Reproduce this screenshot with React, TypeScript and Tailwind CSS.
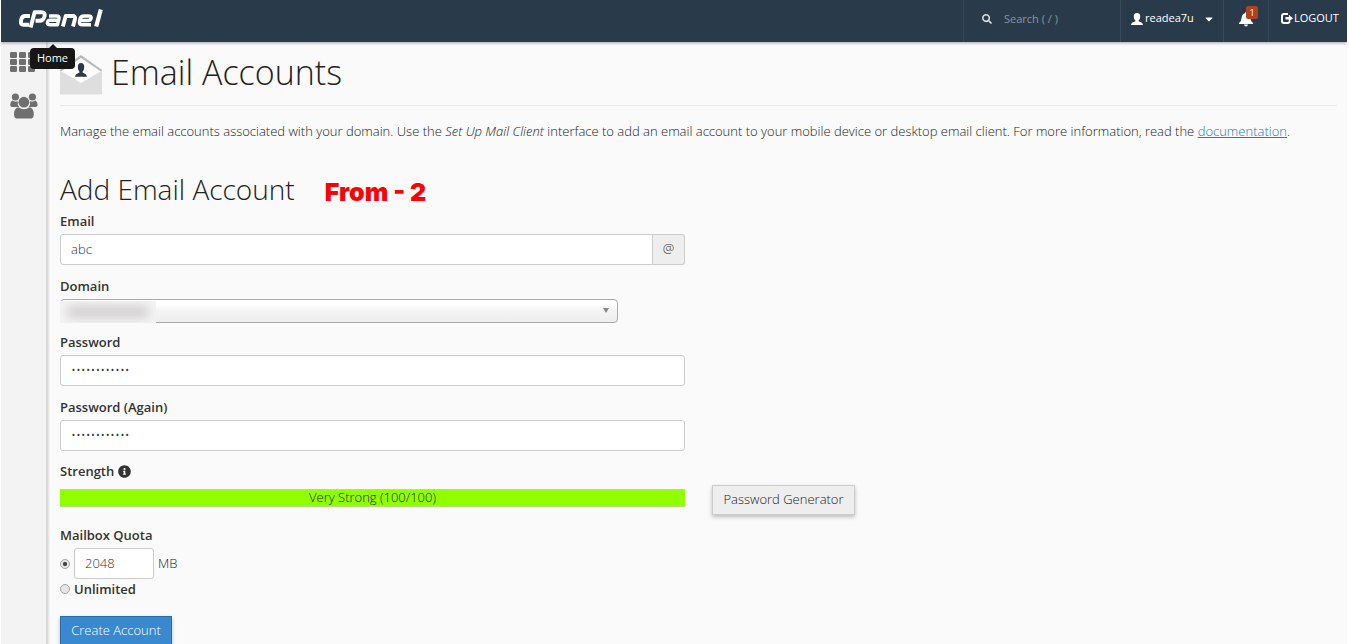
import React from 'react';
import { FaSearch, FaInfoCircle, FaCaretDown } from 'react-icons/fa';

function Logo() {
  return (
    <svg viewBox="0 0 86 20" className="h-5 w-[86px]" fill="none" stroke="#fff" strokeWidth="3.9" strokeLinejoin="round" role="img" aria-label="cPanel">
      <path d="M12 7H7.500Q4.200 7 3.400 10L3 12Q2.300 15.800 5.500 15.800H11" />
      <path d="M12.600 18.400L16.600 3.200H23.500Q27.500 3.200 26.600 7Q25.500 11.800 21.500 11.800H17.500" />
      <path d="M31 7H38.500Q41.700 7 41 9.800L39.400 15.800H31.600Q28.800 15.800 29.400 13.400Q30 11.200 32.200 11.200H40" strokeWidth="3.400" />
      <path d="M44.800 17.500L47.700 7H54.400Q57.800 7 57 10L55 17.500" />
      <path d="M73 15.800H64.500Q60.600 15.800 61.500 12.200L62 10Q62.900 7 66 7H70.400Q73.700 7 73.100 9.400Q72.600 11.500 70.200 11.500H63" strokeWidth="3.400" />
      <path d="M82.800 .5L78.200 17.500" strokeWidth="4.200" />
    </svg>
  );
}

function GridIcon() {
  return (
    <svg viewBox="0 0 26 21" className="h-[21px] w-[26px]" fill="#6f6f6f" aria-hidden="true">
      {[0, 7, 14].map((y) => [0, 9, 18].map((x) => <rect key={`${x}-${y}`} x={x} y={y} width="7" height="6" rx="1.2" />))}
    </svg>
  );
}

function UsersIcon() {
  return (
    <svg viewBox="0 0 28 26" className="h-[26px] w-7" fill="#6f6f6f" aria-hidden="true">
      <circle cx="5.4" cy="4" r="3.6" />
      <circle cx="22.4" cy="4" r="3.6" />
      <path d="M2.6 7.6Q5 9.4 7.8 8.2Q7.2 12 9.2 14H3Q.2 14 .2 11.4Q.4 8.4 2.6 7.6Z" />
      <path d="M25.2 7.6Q22.8 9.4 20 8.2Q20.6 12 18.6 14H24.8Q27.6 14 27.6 11.4Q27.4 8.4 25.2 7.6Z" />
      <circle cx="13.9" cy="9.2" r="5.4" />
      <path d="M8.4 14.3Q13.9 18 19.4 14.3Q23.8 15.2 23.8 21.4Q23.8 25.6 19.8 25.6H8Q4 25.6 4 21.4Q4 15.2 8.4 14.3Z" />
    </svg>
  );
}

const person = 'M6 0C8.4 0 9.300 1.600 9.200 3.400C9.100 5.400 8.600 6.600 7.600 7.400V8.300C8.600 9 11.600 9.300 12 12H0C.4 9.300 3.400 9 4.400 8.300V7.400C3.400 6.600 2.900 5.400 2.800 3.400C2.700 1.600 3.600 0 6 0Z';

function MailIcon() {
  return (
    <svg viewBox="0 0 42 40" className="h-10 w-[42px]" aria-hidden="true">
      <path d="M0 15L21 0L42 15V39H0Z" fill="#b9b9b9" />
      <path d="M1 16.500L21 3L41 16.500V28H1Z" fill="#fff" />
      <path d="M0 15.500L21 28L42 15.500V37.500Q42 39.500 40 39.500H2Q0 39.500 0 37.500Z" fill="#dedede" />
      <g transform="translate(15 8) scale(1 1.150)"><path d={person} fill="#293a4a" /></g>
    </svg>
  );
}

function PersonIcon() {
  return <svg viewBox="0 0 12 12" className="h-3 w-3" fill="#fff" aria-hidden="true"><path d={person} /></svg>;
}

function BellIcon() {
  return (
    <svg viewBox="0 0 14 15" className="h-[15px] w-[14px]" fill="#fff" aria-hidden="true">
      <path d="M7 0Q8 0 8 1.2Q11 2 11.300 5.500Q11.500 9.300 14 11V12H0V11Q2.500 9.300 2.700 5.500Q3 2 6 1.200Q6 0 7 0Z" />
      <path d="M5 12.500H9Q8.700 14.500 7 14.500Q5.300 14.500 5 12.500Z" />
    </svg>
  );
}

function LogoutIcon() {
  return (
    <svg viewBox="0 0 12 11" className="h-[11px] w-3" aria-hidden="true">
      <path d="M7 1H3Q1 1 1 3V8Q1 10 3 10H6.500Q8.500 10 8.500 8.300" fill="none" stroke="#fff" strokeWidth="2" />
      <path d="M4.500 4H7.800V1.700L12 5.300L7.800 8.800V6.600H4.500Z" fill="#fff" />
    </svg>
  );
}

const label = 'block text-[13px] leading-[18px] font-semibold text-[#333]';
const field = 'h-[31px] rounded-[3px] border border-[#ccc] bg-white px-[10px] pb-[2px] text-[13px] text-[#333] outline-none';
const radio = 'h-[10px] w-[10px] shrink-0 appearance-none rounded-full border border-[#a3a3a3] bg-[#e6e6e6] checked:bg-[radial-gradient(circle,#444_30%,#e6e6e6_45%)]';

export default function App() {
  return (
    <div className="bg-white pr-[2px] pl-px font-['Open_Sans',sans-serif] text-[13px] text-[#222]">
      <div className="flex h-screen flex-col overflow-hidden bg-[#fafafa]">
        <header className="relative z-10 flex h-[42px] shrink-0 items-stretch bg-[#293a4a] text-white shadow-[0_1px_3px_rgba(0,0,0,0.35)]">
          <div className="relative flex items-start pt-[9px] pl-[17px]">
            <a href="#home" aria-label="Home"><Logo /></a>
            <div role="tooltip" className="absolute top-[48px] left-[29px] flex h-[21px] w-[45px] items-center justify-center rounded-[4px] bg-[#161616] text-[11px]">
              <span className="absolute -top-1 h-0 w-0 border-x-4 border-b-4 border-x-transparent border-b-[#161616]" />
              Home
            </div>
          </div>
          <label className="ml-auto flex w-[157px] items-center gap-3 border-l border-[#34495b] pb-1 pl-[18px]">
            <FaSearch className="h-[10px] w-[10px] shrink-0 text-[#ddd]" />
            <input aria-label="Search" placeholder="Search ( / )" className="w-[120px] bg-transparent text-[11px] outline-none placeholder:text-[#8b969f]" />
          </label>
          <button className="flex w-[103px] items-center border-l border-[#34495b] pb-[5px] pl-[10px] text-[11px]">
            <PersonIcon /><span className="ml-[2px]">readea7u</span><FaCaretDown className="ml-[9px] h-3 w-3" />
          </button>
          <button aria-label="Notifications" className="flex w-[45px] items-center justify-center border-l border-[#34495b] pb-1">
            <span className="relative"><BellIcon />
              <span className="absolute -top-[6px] left-[7px] flex h-[13px] w-3 items-center justify-center rounded-[2px] bg-[#b5401c] text-[9px] leading-none">1</span>
            </span>
          </button>
          <a href="#logout" className="flex w-[79px] items-center gap-px border-l border-[#34495b] pb-[5px] pl-[12px] text-[11px] text-white"><LogoutIcon />LOGOUT</a>
        </header>
        <div className="flex grow">
          <nav className="flex w-[46px] shrink-0 flex-col gap-5 border-r border-[#d5d5d5] bg-[#f3f3f3] pt-[10px] pl-[9px] shadow-[1px_0_3px_rgba(0,0,0,0.2)]">
            <a href="#apps" aria-label="Applications"><GridIcon /></a>
            <a href="#users" aria-label="User manager"><UsersIcon /></a>
          </nav>
          <main className="min-w-0 grow pr-[10px] pl-[13px] font-[320]">
            <div className="flex h-16 items-start gap-[9px] border-b border-[#eaeaea] pt-[13px]">
              <MailIcon />
              <h1 className="text-[34px] leading-[34px] font-light">Email Accounts</h1>
            </div>
            <p className="mt-4 leading-[18px]">
              Manage the email accounts associated with your domain. Use the <em>Set Up Mail Client</em> interface to add an email account to your mobile device or desktop email client. For more information, read the <a href="#documentation" className="text-[#2a75b8] underline">documentation</a>.
            </p>
            <div className="mt-[30px] flex h-[42px] items-start gap-[30px]">
              <h2 className="text-[28px] leading-[38px] font-light">Add Email Account</h2>
              <span className="font-['Inter',sans-serif] text-[25px] leading-[44px] font-black text-[#f00]">From - 2</span>
            </div>
            <form onSubmit={(e) => e.preventDefault()}>
              <div className="w-[625px]">
                <label htmlFor="email" className={label}>Email</label>
                <div className="mt-1 flex">
                  <input id="email" defaultValue="abc" className={`${field} min-w-0 grow rounded-r-none`} />
                  <span className="flex w-8 items-center justify-center rounded-r-[3px] border border-l-0 border-[#ccc] bg-[#eee] pb-[2px] text-[#333]">@</span>
                </div>
                <label htmlFor="domain" className={`${label} mt-3`}>Domain</label>
                <div className="relative mt-1 w-[558px]">
                  <select id="domain" className="block h-6 w-full appearance-none rounded-[4px] border border-[#aaa] bg-linear-to-b from-white from-20% via-[#f4f4f4] via-50% to-[#eee] outline-none"><option aria-label="Domain" /></select>
                  <span className="pointer-events-none absolute top-[9px] right-[9px] h-0 w-0 border-x-[3px] border-t-[5px] border-x-transparent border-t-[#888]" />
                  <span className="pointer-events-none absolute top-[2px] left-0 h-[22px] w-24 overflow-hidden bg-[#f3f3f3]">
                    <span className="absolute top-[5px] left-2 h-3 w-20 bg-[#d3d0d0] blur-[5px]" />
                  </span>
                </div>
                <label htmlFor="password" className={`${label} mt-[10px]`}>Password</label>
                <input id="password" type="password" defaultValue="abcdefghijkl" className={`${field} mt-1 w-full`} />
                <label htmlFor="again" className={`${label} mt-3`}>Password (Again)</label>
                <input id="again" type="password" defaultValue="abcdefghijkl" className={`${field} mt-1 w-full`} />
                <div className={`${label} mt-[11px] flex items-center gap-1`}>Strength <FaInfoCircle className="h-[13px] w-[13px]" /></div>
              </div>
              <div className="mt-[5px] flex items-start gap-[27px]">
                <div className="mt-1 h-[18px] w-[625px] border-y border-[#b4dd80] bg-[#90ff00] text-center leading-[14px]">Very Strong (100/100)</div>
                <button type="button" className="h-[30px] w-[143px] border border-[#ccc] bg-[#eee] shadow-[0_2px_4px_rgba(0,0,0,0.25)]">Password Generator</button>
              </div>
              <fieldset className="mt-[11px]">
                <legend className={label}>Mailbox Quota</legend>
                <div className="mt-1 flex items-center gap-1">
                  <input type="radio" name="quota" aria-label="Limited quota" defaultChecked className={radio} />
                  <input aria-label="Quota in MB" defaultValue="2048" className={`${field} w-20`} />
                  <span>MB</span>
                </div>
                <div className="flex items-center gap-1 pt-px">
                  <input id="unlimited" type="radio" name="quota" className={radio} />
                  <label htmlFor="unlimited" className={label}>Unlimited</label>
                </div>
              </fieldset>
              <button type="submit" className="mt-[18px] h-[30px] w-[112px] border border-[#2d6ca2] bg-[#3889d0] text-white shadow-[0_2px_4px_rgba(0,0,0,0.25)]">Create Account</button>
            </form>
          </main>
        </div>
      </div>
    </div>
  );
}
